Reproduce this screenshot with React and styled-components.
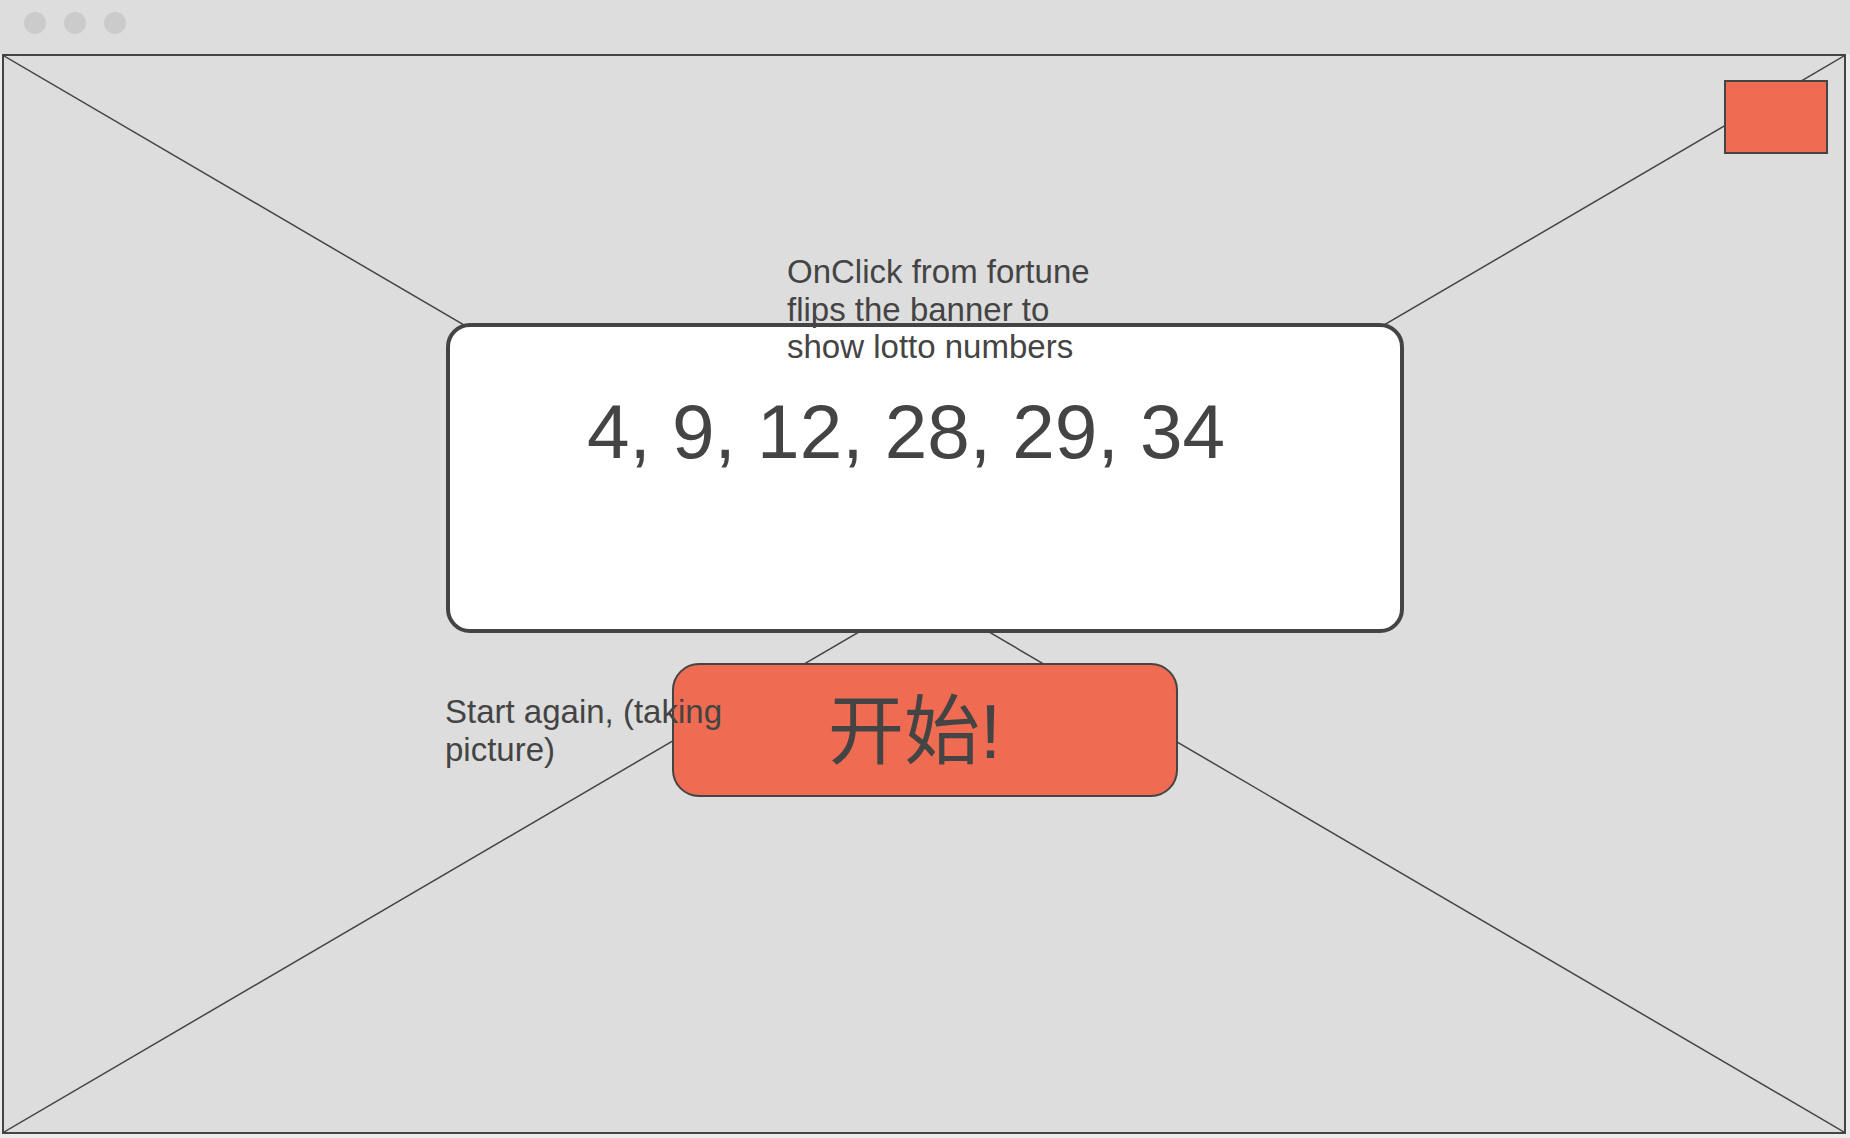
import React from "react";
import styled, { createGlobalStyle } from "styled-components";

const GlobalStyle = createGlobalStyle`
  html, body {
    margin: 0;
    padding: 0;
    background: #ebebeb;
  }
  * { box-sizing: border-box; }
`;

const Window = styled.div`
  width: 1850px;
  height: 1138px;
  display: flex;
  flex-direction: column;
  background: #ebebeb;
  font-family: "Liberation Sans", "Noto Sans CJK SC", sans-serif;
  color: #444444;
`;

const TitleBar = styled.div`
  height: 54px;
  flex: none;
  background: #dddddd;
  display: flex;
  align-items: flex-start;
  gap: 18px;
  padding: 12px 0 0 24px;
`;

const Dot = styled.span`
  width: 22px;
  height: 22px;
  border-radius: 50%;
  background: #cbcbcb;
`;

const Frame = styled.div`
  position: relative;
  flex: 1;
  margin: 0 4px 4px 2px;
  border: 2px solid #444444;
  background: #dddddd;
  padding: 24px 16px 0;
  display: flex;
  flex-direction: column;
  align-items: center;
`;

const Cross = styled.svg`
  position: absolute;
  inset: 0;
  width: 100%;
  height: 100%;
  pointer-events: none;
`;

const TopRow = styled.div`
  align-self: stretch;
  display: flex;
  justify-content: flex-end;
  position: relative;
`;

const CornerBox = styled.div`
  width: 104px;
  height: 74px;
  background: #ef6b51;
  border: 2px solid #444444;
`;

const Banner = styled.div`
  position: relative;
  width: 958px;
  height: 310px;
  margin: 169px 0 0 2px;
  background: #ffffff;
  border: 4px solid #444444;
  border-radius: 24px;
  padding: 67px 0 0 137px;
`;

const Numbers = styled.div`
  font-size: 76.5px;
  line-height: 76px;
  white-space: nowrap;
`;

const StartButton = styled.div`
  position: relative;
  width: 506px;
  height: 134px;
  margin: 30px 0 0 2px;
  background: #ef6b51;
  border: 2px solid #444444;
  border-radius: 27px;
  display: flex;
  align-items: center;
  padding: 4px 0 0 154px;
  font-size: 76px;
  line-height: 76px;
  white-space: nowrap;
`;

const Note = styled.div`
  position: absolute;
  top: ${(p) => p.$top}px;
  left: ${(p) => p.$left}px;
  font-size: 33px;
  line-height: 37.7px;
  white-space: nowrap;
  z-index: 2;
`;

export default function App() {
  return (
    <>
      <GlobalStyle />
      <Window>
        <TitleBar>
          <Dot />
          <Dot />
          <Dot />
        </TitleBar>
        <Frame>
          <Cross viewBox="0 0 100 100" preserveAspectRatio="none">
            <line x1="0" y1="0" x2="100" y2="100" stroke="#444" strokeWidth="1.5" vectorEffect="non-scaling-stroke" />
            <line x1="100" y1="0" x2="0" y2="100" stroke="#444" strokeWidth="1.5" vectorEffect="non-scaling-stroke" />
          </Cross>
          <TopRow>
            <CornerBox />
          </TopRow>
          <Banner>
            <Numbers>4, 9, 12, 28, 29, 34</Numbers>
          </Banner>
          <StartButton>开始!</StartButton>
          <Note $top={197} $left={783}>
            OnClick from fortune
            <br />
            flips the banner to
            <br />
            show lotto numbers
          </Note>
          <Note $top={637} $left={441}>
            Start again, (taking
            <br />
            picture)
          </Note>
        </Frame>
      </Window>
    </>
  );
}
